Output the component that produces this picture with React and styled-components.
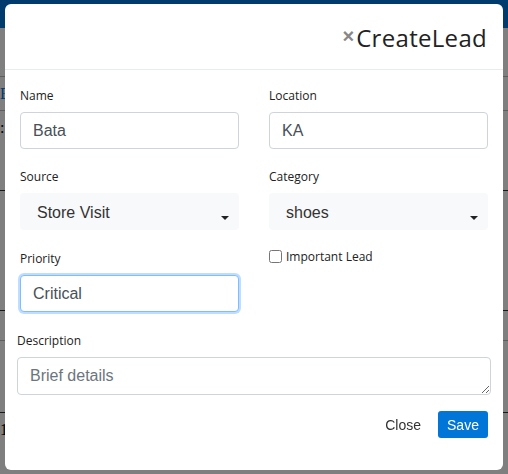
import styled, {createGlobalStyle} from 'styled-components'

const GlobalStyle = createGlobalStyle`
  html, body {
    margin: 0;
    padding: 0;
    font-family: "Liberation Sans", Arial, sans-serif;
  }
`

export default function App() {
    return (
        <>
            <GlobalStyle />
            <Page>
                <Navbar />
                <Table>
                    <Row h={34}><Cell color="#0275d8">E</Cell></Row>
                    <Row h={80}><Cell>:</Cell></Row>
                    <Row h={120} dark />
                    <Row h={30} dark />
                    <Row h={72} />
                    <Row h={62} dark><Cell>1</Cell></Row>
                </Table>
            </Page>
            <Overlay>
                <Modal>
                    <Header>
                        <CloseX>×</CloseX>
                        <Title>CreateLead</Title>
                    </Header>
                    <Body>
                        <Grid>
                            <Field>
                                <Label>Name</Label>
                                <Input defaultValue="Bata" />
                            </Field>
                            <Field>
                                <Label>Location</Label>
                                <Input defaultValue="KA" />
                            </Field>
                            <Field>
                                <Label>Source</Label>
                                <Select>
                                    <span>Store Visit</span>
                                    <Caret />
                                </Select>
                            </Field>
                            <Field>
                                <Label>Category</Label>
                                <Select>
                                    <span>shoes</span>
                                    <Caret />
                                </Select>
                            </Field>
                            <Field>
                                <Label>Priority</Label>
                                <Input defaultValue="Critical" focused />
                            </Field>
                            <Field>
                                <Check>
                                    <input type="checkbox" />
                                    Important Lead
                                </Check>
                            </Field>
                        </Grid>
                        <Field>
                            <Label>Description</Label>
                            <TextArea placeholder="Brief details" />
                        </Field>
                    </Body>
                    <Footer>
                        <LinkButton>Close</LinkButton>
                        <SaveButton>Save</SaveButton>
                    </Footer>
                </Modal>
            </Overlay>
        </>
    )
}

const Page = styled.div`
height: 474px;
background: #fff;
overflow: hidden;
`

const Navbar = styled.div`
height: 28px;
background: #0275d8;
`

const Table = styled.div`
display: flex;
flex-direction: column;
padding-top: 48px;
`

const Row = styled.div`
height: ${p => p.h}px;
box-sizing: border-box;
border-top: 1px solid ${p => p.dark ? '#333' : '#bbb'};
padding-top: 8px;
`

const Cell = styled.span`
display: block;
font-family: "Liberation Serif", serif;
font-size: 16px;
color: ${p => p.color || '#000'};
`

const Overlay = styled.div`
position: fixed;
inset: 0;
background: rgba(0, 0, 0, 0.5);
display: flex;
justify-content: center;
align-items: flex-start;
padding-top: 4px;
`

const Modal = styled.div`
width: 498px;
height: 466px;
background: #fff;
border-radius: 6px;
display: flex;
flex-direction: column;
`

const Header = styled.div`
height: 66px;
box-sizing: border-box;
border-bottom: 1px solid #e9ecef;
display: flex;
justify-content: flex-end;
align-items: center;
padding: 2px 16px 0 0;
`

const CloseX = styled.span`
color: #888;
font-size: 20px;
font-weight: bold;
margin-right: 2px;
margin-top: -2px;
`

const Title = styled.h4`
margin: 0;
font-family: "Comic Sans MS", "Open Sans", sans-serif;
font-weight: 400;
font-size: 24px;
color: #222;
letter-spacing: 0.3px;
`

const Body = styled.div`
padding: 17px 12px 0 12px;
`

const Grid = styled.div`
display: grid;
grid-template-columns: 219px 219px;
column-gap: 30px;
padding: 0 3px;
`

const Field = styled.div`
display: flex;
flex-direction: column;
margin-bottom: 19px;

&:nth-child(n+3) {
    margin-bottom: 20px;
}
`

const Label = styled.label`
font-family: "Comic Sans MS", "Open Sans", sans-serif;
font-size: 12px;
line-height: 18px;
color: #222;
margin-bottom: 7px;
`

const Input = styled.input`
height: 37px;
box-sizing: border-box;
border: 1px solid ${p => p.focused ? '#80bdff' : '#ced4da'};
box-shadow: ${p => p.focused ? '0 0 0 2px rgba(0, 123, 255, 0.25)' : 'none'};
border-radius: 4px;
padding: 0 12px;
font-family: "Liberation Sans", Arial, sans-serif;
font-size: 16px;
color: #495057;
outline: none;
`

const Select = styled.div`
height: 37px;
box-sizing: border-box;
background: #f8f9fa;
border-radius: 4px;
padding: 2px 10px 0 17px;
display: flex;
align-items: center;
justify-content: space-between;
font-size: 16px;
color: #333;
`

const Caret = styled.span`
width: 0;
height: 0;
border-left: 4px solid transparent;
border-right: 4px solid transparent;
border-top: 4px solid #222;
margin-top: 10px;
`

const Check = styled.label`
display: flex;
align-items: center;
font-family: "Comic Sans MS", "Open Sans", sans-serif;
font-size: 12px;
color: #222;
margin-top: -2px;

input {
    margin: 0 4px 0 0;
    width: 13px;
    height: 13px;
}
`

const TextArea = styled.textarea`
height: 38px;
box-sizing: border-box;
border: 1px solid #ced4da;
border-radius: 4px;
padding: 9px 12px 0;
font-family: "Liberation Sans", Arial, sans-serif;
font-size: 16px;
color: #495057;
resize: vertical;

&::placeholder {
    color: #6c757d;
}
`

const Footer = styled.div`
display: flex;
justify-content: flex-end;
align-items: center;
gap: 17px;
padding: 0 15px;
margin-top: -3px;
`

const LinkButton = styled.button`
border: none;
background: none;
padding: 0;
font-family: "Liberation Sans", Arial, sans-serif;
font-size: 14px;
color: #333;
`

const SaveButton = styled.button`
border: none;
background: #0275d8;
color: #fff;
border-radius: 3px;
width: 50px;
height: 27px;
font-family: "Liberation Sans", Arial, sans-serif;
font-size: 14px;
`
